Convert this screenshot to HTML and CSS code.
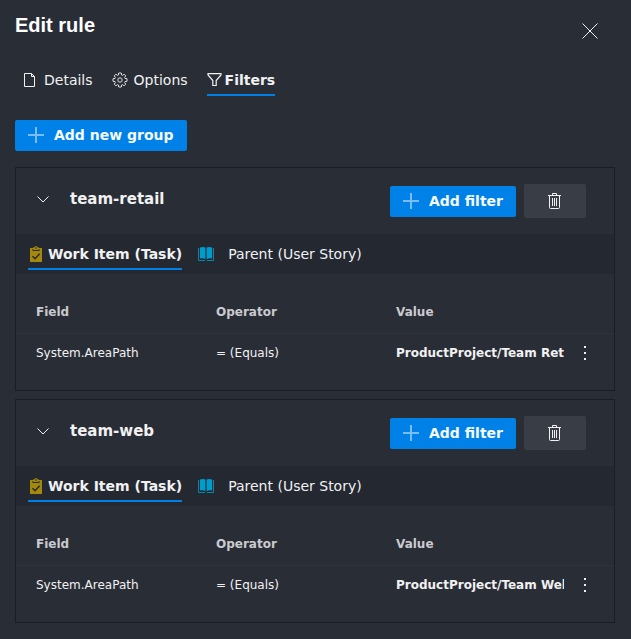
FILE: index.html
```html
<!DOCTYPE html>
<html lang="en">
<head>
<meta charset="utf-8">
<title>Edit rule</title>
<link rel="stylesheet" href="styles.css">
</head>
<body>
<svg class="sprite" aria-hidden="true">
  <symbol id="plus" viewBox="0 0 16 16"><path d="M0 8H16M8 0V16" stroke="currentColor" stroke-width="2" opacity=".5"/></symbol>
  <symbol id="chevron" viewBox="0 0 16 16"><path d="M2.500 5.500L8 11L13.500 5.500" fill="none" stroke="currentColor"/></symbol>
  <symbol id="trash" viewBox="0 0 16 16"><path d="M1 2.500H14M5.500 2.500V.500H9.500V2.500M2.500 2.500V14.500Q2.500 15.500 3.500 15.500H11.500Q12.500 15.500 12.500 14.500V2.500M5.500 5V13M7.500 5V13M9.500 5V13" fill="none" stroke="currentColor"/></symbol>
  <symbol id="task" viewBox="0 0 16 16"><path fill="#a4880a" fill-rule="evenodd" d="M2 2H5.200V1.300H6.500Q7 0 8 0T9.500 1.300H10.800V2H14V16H2ZM4.500 3V5H11.500V3H10.700V4H5.300V3Z"/><circle cx="8" cy="2" r=".8" fill="#242831"/><path d="M4.500 10.300L7 12.700L11.700 7.800" fill="none" stroke="#242831" stroke-width="1.500"/></symbol>
  <symbol id="book" viewBox="0 0 16 16"><path d="M.500 2V14.500H7M15.500 2V14.500H9" fill="none" stroke="#0688ae"/><path fill="#009ccc" d="M2 1.500Q5 .500 7.300 1.500V13Q5 12 2 12.500ZM8.700 1.500Q11 .500 14 1.500V12.500Q11 12 8.700 13Z"/><path d="M8 1.500V13.500" stroke="#076d8c"/></symbol>
  <symbol id="more" viewBox="0 0 16 16"><path fill="currentColor" d="M7 1H9V3H7ZM7 7H9V9H7ZM7 13H9V15H7Z"/></symbol>
</svg>
<main class="panel">
  <header class="panel-header">
    <h1>Edit rule</h1>
    <button class="icon-button" aria-label="Close"><svg class="icon" viewBox="0 0 16 16"><path d="M.500 .500L15.500 15.500M15.500 .500L.500 15.500" stroke="currentColor"/></svg></button>
  </header>

  <nav class="tabs" aria-label="Rule sections">
    <a class="tab" href="#details"><svg class="icon" viewBox="0 0 16 16"><path d="M2.500 1.500H9.500L12.500 4.500V14.500H2.500ZM9.500 1.500V4.500H12.500" fill="none" stroke="currentColor"/></svg>Details</a>
    <a class="tab" href="#options"><svg class="icon" viewBox="0 0 16 16"><path d="M6.700 1H9.300L9.600 3L10.600 3.400L12.100 2.200L13.800 3.900L12.600 5.400L13 6.400L15 6.700V9.300L13 9.600L12.600 10.600L13.800 12.100L12.100 13.800L10.600 12.600L9.600 13L9.300 15H6.700L6.400 13L5.400 12.600L3.900 13.800L2.200 12.100L3.400 10.600L3 9.600L1 9.300V6.700L3 6.400L3.400 5.400L2.200 3.900L3.900 2.200L5.400 3.400L6.400 3Z" fill="none" stroke="currentColor" stroke-width=".9"/><circle cx="8" cy="8" r="2.200" fill="none" stroke="currentColor" stroke-width=".9"/></svg>Options</a>
    <a class="tab tight selected" href="#filters" aria-current="page"><svg class="icon" viewBox="0 0 16 16"><path d="M1 1.700H14V3L9.200 8.500V13.500H5.800V8.500L1 3Z" fill="none" stroke="currentColor" stroke-width="1.200"/></svg>Filters</a>
  </nav>

  <button class="primary"><svg class="icon"><use href="#plus"/></svg>Add new group</button>

  <div class="groups">
    <section class="group">
      <header class="group-header">
        <button class="toggle" aria-label="Collapse team-retail" aria-expanded="true"><svg class="icon"><use href="#chevron"/></svg></button>
        <h2>team-retail</h2>
        <button class="primary"><svg class="icon"><use href="#plus"/></svg>Add filter</button>
        <button class="delete" aria-label="Delete team-retail"><svg class="icon"><use href="#trash"/></svg></button>
      </header>
      <nav class="item-tabs" aria-label="team-retail work items">
        <a class="item-tab selected" href="#retail-task"><svg class="icon"><use href="#task"/></svg>Work Item (Task)</a>
        <a class="item-tab wide" href="#retail-parent"><svg class="icon"><use href="#book"/></svg>Parent (User Story)</a>
      </nav>
      <table>
        <colgroup><col class="text-col"><col class="text-col"><col><col class="menu-col"></colgroup>
        <thead><tr><th scope="col">Field</th><th scope="col">Operator</th><th scope="col">Value</th><td></td></tr></thead>
        <tbody><tr><td>System.AreaPath</td><td>= (Equals)</td><td class="value">ProductProject/Team Retail</td><td class="menu"><button class="more" aria-label="More options"><svg class="icon"><use href="#more"/></svg></button></td></tr></tbody>
      </table>
    </section>

    <section class="group">
      <header class="group-header">
        <button class="toggle" aria-label="Collapse team-web" aria-expanded="true"><svg class="icon"><use href="#chevron"/></svg></button>
        <h2>team-web</h2>
        <button class="primary"><svg class="icon"><use href="#plus"/></svg>Add filter</button>
        <button class="delete" aria-label="Delete team-web"><svg class="icon"><use href="#trash"/></svg></button>
      </header>
      <nav class="item-tabs" aria-label="team-web work items">
        <a class="item-tab selected" href="#web-task"><svg class="icon"><use href="#task"/></svg>Work Item (Task)</a>
        <a class="item-tab wide" href="#web-parent"><svg class="icon"><use href="#book"/></svg>Parent (User Story)</a>
      </nav>
      <table>
        <colgroup><col class="text-col"><col class="text-col"><col><col class="menu-col"></colgroup>
        <thead><tr><th scope="col">Field</th><th scope="col">Operator</th><th scope="col">Value</th><td></td></tr></thead>
        <tbody><tr><td>System.AreaPath</td><td>= (Equals)</td><td class="value">ProductProject/Team Web</td><td class="menu"><button class="more" aria-label="More options"><svg class="icon"><use href="#more"/></svg></button></td></tr></tbody>
      </table>
    </section>
  </div>
</main>
</body>
</html>
```
FILE: styles.css
```css
* { box-sizing: border-box; }

body {
  margin: 0;
  background: #292d36;
  color: #f1f1f2;
  font: 14px/20px "DejaVu Sans", sans-serif;
}

.sprite { display: none; }

.icon {
  display: block;
  flex: none;
  width: 16px;
  height: 16px;
}

button {
  border: 0;
  padding: 0;
  background: none;
  color: inherit;
  font: inherit;
  cursor: pointer;
}

a {
  color: inherit;
  text-decoration: none;
}

.panel { padding: 14px 16px 16px 15px; }

.panel-header {
  display: flex;
  justify-content: space-between;
  padding-right: 9px;
}

h1 {
  margin: 0;
  color: #fff;
  font: bold 20px/22px "Liberation Sans", sans-serif;
}

.icon-button {
  display: grid;
  place-items: center;
  width: 32px;
  height: 34px;
}

.tabs {
  display: flex;
  gap: 19px;
  margin: 16px 0 24px 7px;
}

.tab {
  display: flex;
  align-items: center;
  gap: 6px;
  height: 32px;
}

.tab.tight { gap: 2px; }

.selected {
  font-weight: bold;
  box-shadow: inset 0 -2px #0080e5;
}

.primary {
  display: flex;
  align-items: center;
  gap: 10px;
  height: 31px;
  padding: 0 13px 1px;
  border-radius: 2px;
  background: #0081e7;
  color: #f5faff;
  font-weight: bold;
}

.groups {
  display: grid;
  gap: 8px;
  margin-top: 16px;
}

.group {
  padding-bottom: 18px;
  border: 1px solid #191d28;
  min-width: 0;
}

.group-header {
  display: flex;
  align-items: center;
  gap: 8px;
  height: 66px;
  padding: 0 28px 0 11px;
}

.toggle {
  display: grid;
  place-items: center;
  width: 32px;
  height: 36px;
  padding-bottom: 4px;
}

h2 {
  flex: 1;
  margin: 0;
  padding: 0 0 4px 3px;
  font-size: 15px;
  line-height: 20px;
}

.delete {
  display: grid;
  place-items: center;
  width: 62px;
  height: 34px;
  border-radius: 2px;
  background: #393d46;
}

.item-tabs {
  display: flex;
  gap: 16px;
  height: 40px;
  padding: 0 12px 4px;
  background: #242831;
}

.item-tab {
  display: flex;
  align-items: center;
  gap: 4px;
  padding-top: 4px;
}

.item-tab.wide { gap: 14px; }

table {
  width: 100%;
  table-layout: fixed;
  border-collapse: collapse;
  font-size: 12px;
  line-height: 18px;
}

.text-col { width: 180px; }
.menu-col { width: 50px; }

th, td {
  height: 38px;
  padding: 0 0 0 20px;
  text-align: left;
}

th {
  height: 59px;
  padding-top: 17px;
  color: #cacbce;
}

tbody td { height: 39px; }

thead tr { border-bottom: 1px solid #2f333c; }

.value {
  overflow: hidden;
  font-weight: bold;
  white-space: nowrap;
}

.menu { padding-left: 5px; }

.more {
  display: grid;
  place-items: center;
  width: 32px;
  height: 32px;
}
```
